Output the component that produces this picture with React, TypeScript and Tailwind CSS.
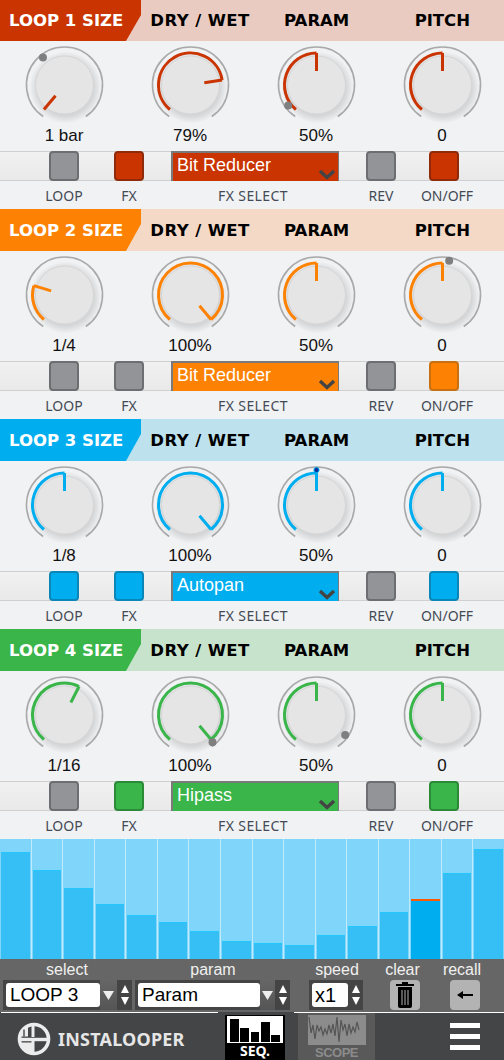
import React from 'react';

const sans = "font-['Liberation_Sans',Arial,sans-serif]";
const head = "font-['DejaVu_Sans',Verdana,sans-serif]";
const caps = "font-['Noto_Sans',sans-serif]";

interface KnobData {
  angle: number;
  value: string;
  dot?: number;
  dotBlue?: boolean;
}

interface LoopData {
  n: number;
  color: string;
  dark: string;
  light: string;
  title: string;
  fx: string;
  knobs: KnobData[];
  loopOn: boolean;
  fxOn: boolean;
  onOff: boolean;
}

const polar = (r: number, deg: number) => {
  const a = ((deg - 90) * Math.PI) / 180;
  return [64.5 + r * Math.cos(a), 44 + r * Math.sin(a)];
};

const arc = (r: number, from: number, to: number) => {
  const [x1, y1] = polar(r, from);
  const [x2, y2] = polar(r, to);
  const large = to - from > 180 ? 1 : 0;
  return `M${x1} ${y1}A${r} ${r} 0 ${large} 1 ${x2} ${y2}`;
};

const Knob = ({ knob, color, id }: { knob: KnobData; color: string; id: string }) => {
  const [lx1, ly1] = polar(14, knob.angle);
  const [lx2, ly2] = polar(32, knob.angle);
  const dot = knob.dot !== undefined ? polar(35, knob.dot) : null;
  return (
    <svg width="126" height="84" viewBox="0 0 126 84" className="block">
      <defs>
        <radialGradient id={id} cx="0.5" cy="0.5" r="0.5">
          <stop offset="0.78" stopColor="#d4d5d7" />
          <stop offset="1" stopColor="#f1f2f4" />
        </radialGradient>
      </defs>
      <circle cx="65.5" cy="46.5" r="36" fill={`url(#${id})`} />
      <path d={arc(38, -146, 146)} fill="none" stroke="#a9a9a9" strokeWidth="1.6" />
      <circle cx="64.5" cy="44" r="29" fill="#e5e5e5" stroke="#d6d6d6" strokeWidth="1" />
      {knob.angle > -139 && <path d={arc(32, -140, knob.angle)} fill="none" stroke={color} strokeWidth="3" />}
      <line x1={lx1} y1={ly1} x2={lx2} y2={ly2} stroke={color} strokeWidth="3" />
      {dot &&
        (knob.dotBlue ? (
          <circle cx={dot[0]} cy={dot[1]} r="2.6" fill="#0a2f9a" stroke="#00aeef" strokeWidth="1" />
        ) : (
          <circle cx={dot[0]} cy={dot[1]} r="4" fill="#7f7f7f" />
        ))}
    </svg>
  );
};

const Square = ({ on, color, dark }: { on: boolean; color: string; dark: string }) => (
  <div
    className="w-[30px] h-[30px] shrink-0 rounded-[4px] border-2"
    style={on ? { backgroundColor: color, borderColor: dark } : { backgroundColor: '#929497', borderColor: '#6d6e71' }}
  />
);

const Cap = ({ text, w = 30 }: { text: string; w?: number }) => (
  <div className="flex justify-center shrink-0 whitespace-nowrap" style={{ width: w }}>
    {text}
  </div>
);

const titles = ['DRY / WET', 'PARAM', 'PITCH'];

const LoopSection = ({ loop }: { loop: LoopData }) => (
  <section className={`${loop.n === 4 ? 'h-[209px]' : 'h-[210px]'} bg-[#f1f2f4] flex flex-col`}>
    <div className={`flex shrink-0 ${loop.n > 1 ? 'h-[42px] -mt-px' : 'h-[41px]'}`} style={{ backgroundColor: loop.light }}>
      <div
        className={`w-[141px] shrink-0 flex items-center pl-[9px] text-white text-[16.5px] font-bold whitespace-nowrap ${head} [clip-path:polygon(0_0,100%_0,100%_15px,126px_100%,0_100%)] ${loop.n > 1 ? 'pt-[3px]' : 'pt-[2px]'}`}
        style={{ backgroundColor: loop.color }}
      >
        {loop.title}
      </div>
      <div className={`flex-1 grid grid-cols-3 ml-[-14px] text-black text-[16.5px] font-bold ${head} ${loop.n > 1 ? 'pt-[3px]' : 'pt-[2px]'}`}>
        {titles.map((t, i) => (
          <div
            key={t}
            className={`w-[126px] flex items-center justify-center whitespace-nowrap ${i === 0 ? 'pl-[20px] tracking-[0.4px]' : 'pl-[2px]'}`}
          >
            {t}
          </div>
        ))}
      </div>
    </div>
    <div className="grid grid-cols-4 h-[84px]">
      {loop.knobs.map((k, i) => (
        <Knob key={i} knob={k} color={loop.color} id={`g${loop.n}${i}`} />
      ))}
    </div>
    <div className={`grid grid-cols-4 h-[26px] text-[17px] text-[#111] leading-[21px] ${sans}`}>
      {loop.knobs.map((k, i) => (
        <div key={i} className="text-center pl-[2px]">
          {k.value}
        </div>
      ))}
    </div>
    <div className="h-[30px] flex items-center pl-[49px] border-y border-[#cfcfcf] bg-gradient-to-b from-[#f1f1f1] to-[#e9e9e9]">
      <Square on={loop.loopOn} color={loop.color} dark={loop.dark} />
      <div className="w-[35px] shrink-0" />
      <Square on={loop.fxOn} color={loop.color} dark={loop.dark} />
      <div
        className="ml-[27px] w-[168px] h-[30px] shrink-0 border-t-2 border-l-2 border-r border-[#7a7a7a] relative text-white text-[18px] leading-[22px] pl-[4px]"
        style={{ backgroundColor: loop.color }}
      >
        <span className={sans}>{loop.fx}</span>
        <svg width="18" height="11" viewBox="0 0 18 11" className="absolute right-[2px] bottom-[1px]">
          <path d="M2 2l7 6.5 7-6.5" fill="none" stroke="#444" strokeWidth="3.4" />
        </svg>
      </div>
      <div className="ml-[27px]">
        <Square on={false} color={loop.color} dark={loop.dark} />
      </div>
      <div className="ml-[33px]">
        <Square on={loop.onOff} color={loop.color} dark={loop.dark} />
      </div>
    </div>
    <div className={`flex pl-[49px] pt-[5px] text-[14px] leading-[20px] text-[#444a55] ${caps}`}>
      <Cap text="LOOP" />
      <div className="w-[35px] shrink-0" />
      <Cap text="FX" />
      <div className="ml-[25px] tracking-[0.4px]">
        <Cap text="FX SELECT" w={168} />
      </div>
      <div className="ml-[29px]">
        <Cap text="REV" />
      </div>
      <div className="ml-[36px]">
        <Cap text="ON/OFF" />
      </div>
    </div>
  </section>
);

const loops: LoopData[] = [
  {
    n: 1, color: '#c93400', dark: '#8f2a0a', light: '#eacbc1', title: 'LOOP 1 SIZE', fx: 'Bit Reducer',
    loopOn: false, fxOn: true, onOff: true,
    knobs: [
      { angle: -140, value: '1 bar', dot: -38 },
      { angle: 81, value: '79%' },
      { angle: 0, value: '50%', dot: -126 },
      { angle: 0, value: '0' },
    ],
  },
  {
    n: 2, color: '#fd8204', dark: '#c8700f', light: '#f4d9c6', title: 'LOOP 2 SIZE', fx: 'Bit Reducer',
    loopOn: false, fxOn: false, onOff: true,
    knobs: [
      { angle: -73, value: '1/4' },
      { angle: 140, value: '100%' },
      { angle: 0, value: '50%' },
      { angle: 0, value: '0', dot: 11 },
    ],
  },
  {
    n: 3, color: '#00aeef', dark: '#0a86b8', light: '#bde2ee', title: 'LOOP 3 SIZE', fx: 'Autopan',
    loopOn: true, fxOn: true, onOff: true,
    knobs: [
      { angle: 0, value: '1/8' },
      { angle: 140, value: '100%' },
      { angle: 0, value: '50%', dot: 0, dotBlue: true },
      { angle: 0, value: '0' },
    ],
  },
  {
    n: 4, color: '#39b54a', dark: '#2a8a38', light: '#c8e3cc', title: 'LOOP 4 SIZE', fx: 'Hipass',
    loopOn: false, fxOn: true, onOff: true,
    knobs: [
      { angle: 27, value: '1/16' },
      { angle: 140, value: '100%', dot: 141 },
      { angle: 0, value: '50%', dot: 125 },
      { angle: 0, value: '0' },
    ],
  },
];

const barHeights = [107, 89, 71, 55, 44, 37, 28, 18, 16, 14, 24, 33, 47, 60, 86, 110];

const Sequencer = () => (
  <div className="h-[120px] flex bg-[#7fd6fa]">
    {barHeights.map((h, i) => (
      <div key={i} className={`flex-1 flex items-end px-[1px] ${i > 0 ? 'border-l border-white/50' : ''}`}>
        <div
          className={`w-full border-t ${i === 13 ? 'bg-[#00aeef] border-t-2 border-[#ff5a00]' : 'bg-[#36bff5] border-[#22c8ff]'}`}
          style={{ height: h }}
        />
      </div>
    ))}
  </div>
);

const Spinner = () => (
  <div className="w-[15px] shrink-0 flex flex-col items-center justify-center gap-[4px]">
    <svg width="8" height="8" viewBox="0 0 8 8"><path d="M4 0l4 8H0z" fill="#fff" /></svg>
    <svg width="8" height="8" viewBox="0 0 8 8"><path d="M0 0h8L4 8z" fill="#fff" /></svg>
  </div>
);

const Picker = ({ text, w, field }: { text: string; w: number; field: number }) => (
  <div className="h-[30px] flex items-center bg-[#444] shrink-0 pl-[3px]" style={{ width: w }}>
    <div
      className={`h-[24px] bg-white rounded-[3px] text-black text-[19px] leading-[24px] pl-[4px] ${sans}`}
      style={{ width: field }}
    >
      {text}
    </div>
    <div className="flex-1 h-full bg-gradient-to-b from-[#666] to-[#555] flex items-center justify-center">
      <svg width="11" height="9" viewBox="0 0 11 9"><path d="M0 0h11L5.5 9z" fill="#eee" /></svg>
    </div>
    <Spinner />
  </div>
);

const Controls = () => (
  <div className={`h-[53px] bg-[#666] text-[#f0f0f0] text-[16px] ${sans}`}>
    <div className="h-[21px] flex leading-[21px]">
      <div className="w-[134px] text-center">select</div>
      <div className="w-[158px] text-center">param</div>
      <div className="w-[90px] text-center">speed</div>
      <div className="w-[41px] text-center">clear</div>
      <div className="w-[78px] text-center">recall</div>
    </div>
    <div className="flex pl-[3px]">
      <Picker text="LOOP 3" w={129} field={94} />
      <div className="ml-[3px]">
        <Picker text="Param" w={155} field={122} />
      </div>
      <div className="ml-[19px] h-[30px] w-[54px] bg-[#444] flex items-center pl-[3px] shrink-0">
        <div className="w-[36px] h-[24px] bg-white rounded-[3px] text-black text-[20px] leading-[24px] pl-[3px]">x1</div>
        <Spinner />
      </div>
      <button className="ml-[27px] w-[30px] h-[30px] rounded-[4px] bg-[#b3b3b3] flex items-center justify-center">
        <svg width="18" height="26" viewBox="0 0 18 26">
          <path d="M6 0h6v2h6v2H0V2h6z" fill="#000" />
          <path d="M2 5h14v19a2 2 0 0 1-2 2H4a2 2 0 0 1-2-2z" fill="#000" />
          <path d="M6 8v15M9 8v15M12 8v15" stroke="#b3b3b3" strokeWidth="1" />
        </svg>
      </button>
      <button className="ml-[30px] w-[30px] h-[30px] rounded-[4px] bg-[#b3b3b3] flex items-center justify-center">
        <svg width="16" height="10" viewBox="0 0 16 10">
          <path d="M0 5l6-4v3h10v2H6v3z" fill="#000" />
        </svg>
      </button>
    </div>
  </div>
);

const Logo = () => (
  <svg width="34" height="34" viewBox="0 0 34 34" className="shrink-0">
    <circle cx="17" cy="17" r="14.5" fill="none" stroke="#ececec" strokeWidth="3.6" />
    <path d="M2 17.5h30" stroke="#ececec" strokeWidth="3.4" />
    <path d="M16 2v13M16 19v13" stroke="#ececec" strokeWidth="3" />
    <path d="M3 14.5A15 15 0 0 1 11 3.5V14.5z" fill="#ececec" />
    <path d="M7 7.5v7" stroke="#434547" strokeWidth="1.4" />
    <path d="M3 20.5A15 15 0 0 0 15 31.5V20.5z" fill="#ececec" />
  </svg>
);

const seqBars = [23, 14, 10, 20, 7];

const NavBar = () => (
  <div className="h-[48px] flex bg-[#434547]">
    <div className="w-[217px] shrink-0 border-t border-white flex items-center pl-[16px] pt-[5px] ml-[1px] gap-[7px]">
      <Logo />
      <span className={`text-[#e6e6e6] text-[18px] font-bold tracking-[0.2px] ${caps}`}>INSTALOOPER</span>
    </div>
    <div className="w-[76px] shrink-0 flex justify-center pr-[2px]">
      <div className="w-[60px] h-[45px] mt-[3px] bg-black flex flex-col">
        <div className="mx-[2px] mt-[1px] h-[27px] bg-white flex items-end justify-center gap-[1.5px] px-[3px] pb-[1px]">
          {seqBars.map((h, i) => (
            <div key={i} className="w-[9px] bg-black" style={{ height: h }} />
          ))}
        </div>
        <div className={`text-white text-[14px] leading-[16px] font-bold text-center ${caps}`}>SEQ.</div>
      </div>
    </div>
    <div className="flex-1 border-t border-white flex">
      <div className="w-[77px] ml-[4px] h-full bg-[#595959] flex flex-col items-center pt-[2px]">
        <svg width="58" height="30" viewBox="0 0 58 30" className="bg-[#8c8c8c] shrink-0">
          <path
            d="M1 2l2 16 2-8 2 14 2-14 2 6 2-4 2 8 2-6 2 5 2-9 2 8 2-9 2 12 2-19 2 25 2-22 2 10 2-6 2 12 2-12 2 9 2-6 2 5 2-10 2 8"
            fill="none"
            stroke="#555"
            strokeWidth="1.2"
          />
        </svg>
        <div className={`text-[#8c8c8c] text-[13px] leading-[15px] font-bold tracking-[-0.5px] ${sans}`}>SCOPE</div>
      </div>
      <div className="flex-1 flex justify-end items-center pr-[24px]">
        <div className="w-[30px] flex flex-col gap-[6px]">
          <div className="h-[5px] bg-white" />
          <div className="h-[5px] bg-white" />
          <div className="h-[5px] bg-white" />
        </div>
      </div>
    </div>
  </div>
);

export default function App() {
  return (
    <div className="w-[504px] h-[1060px] overflow-hidden bg-[#f1f2f4]">
      {loops.map((l) => (
        <LoopSection key={l.n} loop={l} />
      ))}
      <Sequencer />
      <Controls />
      <NavBar />
    </div>
  );
}
